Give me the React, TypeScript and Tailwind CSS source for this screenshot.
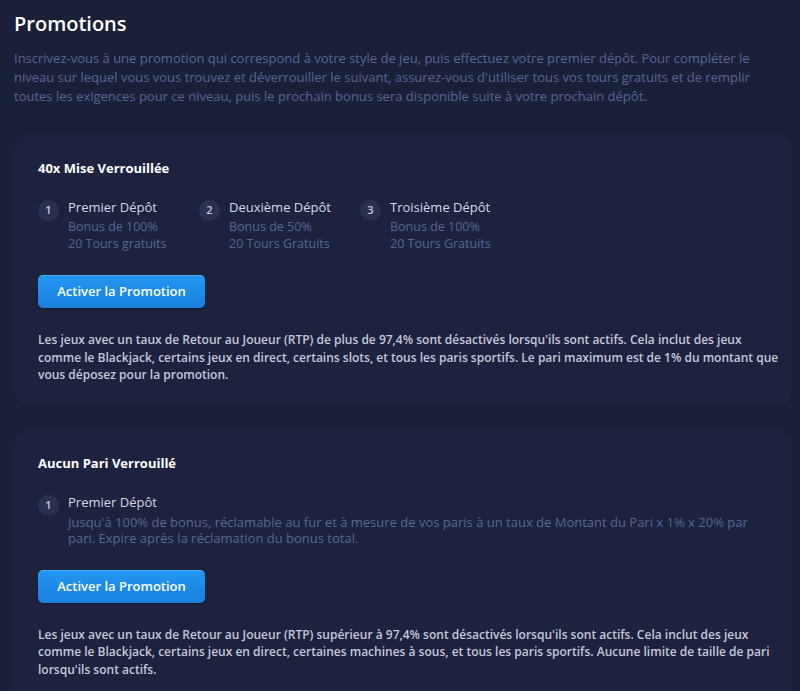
import React from "react";

const font = { fontFamily: '"Open Sans", "Noto Sans", sans-serif' };

function Circle({ n }: { n: number }) {
  return (
    <div className="w-[21px] h-[21px] rounded-full bg-[#2a3050] text-[#c3c7da] text-[11px] font-semibold flex items-center justify-center shrink-0 mt-[3px]">
      {n}
    </div>
  );
}

function Step({ n, title, lines }: { n: number; title: string; lines: [string, string] }) {
  return (
    <div className="flex items-start gap-[9px] w-[161px]">
      <Circle n={n} />
      <div className="flex flex-col">
        <div className="text-[13px] font-medium text-[#d4d7e5] leading-[20px]">{title}</div>
        <div className="mt-[1px] text-[12.5px] text-[#5b6491] leading-[17px]">{lines[0]}</div>
        <div className="text-[12.5px] text-[#5b6491] leading-[17px]">{lines[1]}</div>
      </div>
    </div>
  );
}

function Button() {
  return (
    <button className="w-[167px] h-[33px] rounded-[5px] bg-gradient-to-b from-[#2196f0] to-[#1a80de] text-white text-[13px] font-semibold border-t border-[#4fb0f7] shadow-[0_1px_2px_rgba(0,0,0,0.3)]">
      Activer la Promotion
    </button>
  );
}

export default function App() {
  return (
    <div className="w-[800px] h-[691px] overflow-hidden bg-[#1b2039] px-[14px] pt-[10px]" style={font}>
      <h1 className="text-[20px] font-semibold text-white leading-[28px]">Promotions</h1>
      <p className="mt-[11px] text-[13px] leading-[19px] text-[#5a6394] w-[760px]">
        Inscrivez-vous à une promotion qui correspond à votre style de jeu, puis effectuez votre premier dépôt. Pour compléter le niveau sur lequel vous vous trouvez et déverrouiller le suivant, assurez-vous d'utiliser tous vos tours gratuits et de remplir toutes les exigences pour ce niveau, puis le prochain bonus sera disponible suite à votre prochain dépôt.
      </p>

      <div className="mt-[29px] rounded-[12px] bg-[#1d223e] px-[24px] pt-[24px] pb-[21px] w-[778px]">
        <h2 className="text-[13px] font-bold text-white leading-[18px]">40x Mise Verrouillée</h2>
        <div className="mt-[20px] flex">
          <Step n={1} title="Premier Dépôt" lines={["Bonus de 100%", "20 Tours gratuits"]} />
          <Step n={2} title="Deuxième Dépôt" lines={["Bonus de 50%", "20 Tours Gratuits"]} />
          <Step n={3} title="Troisième Dépôt" lines={["Bonus de 100%", "20 Tours Gratuits"]} />
        </div>
        <div className="mt-[23px]">
          <Button />
        </div>
        <p className="mt-[23px] text-[12px] font-semibold leading-[17.5px] text-[#c4c8da] w-[745px]">
          Les jeux avec un taux de Retour au Joueur (RTP) de plus de 97,4% sont désactivés lorsqu'ils sont actifs. Cela inclut des jeux comme le Blackjack, certains jeux en direct, certains slots, et tous les paris sportifs. Le pari maximum est de 1% du montant que vous déposez pour la promotion.
        </p>
      </div>

      <div className="mt-[25px] rounded-[12px] bg-[#1d223e] px-[24px] pt-[24px] pb-[21px] w-[778px]">
        <h2 className="text-[13px] font-bold text-white leading-[18px]">Aucun Pari Verrouillé</h2>
        <div className="mt-[20px] flex items-start gap-[9px]">
          <Circle n={1} />
          <div className="flex flex-col w-[692px]">
            <div className="text-[13px] font-medium text-[#d4d7e5] leading-[20px]">Premier Dépôt</div>
            <div className="mt-[2px] text-[13px] text-[#5b6491] leading-[16px]">
              Jusqu'à 100% de bonus, réclamable au fur et à mesure de vos paris à un taux de Montant du Pari x 1% x 20% par pari. Expire après la réclamation du bonus total.
            </div>
          </div>
        </div>
        <div className="mt-[24px]">
          <Button />
        </div>
        <p className="mt-[23px] text-[12px] font-semibold leading-[17.5px] text-[#c4c8da] w-[745px]">
          Les jeux avec un taux de Retour au Joueur (RTP) supérieur à 97,4% sont désactivés lorsqu'ils sont actifs. Cela inclut des jeux comme le Blackjack, certains jeux en direct, certaines machines à sous, et tous les paris sportifs. Aucune limite de taille de pari lorsqu'ils sont actifs.
        </p>
      </div>
    </div>
  );
}
